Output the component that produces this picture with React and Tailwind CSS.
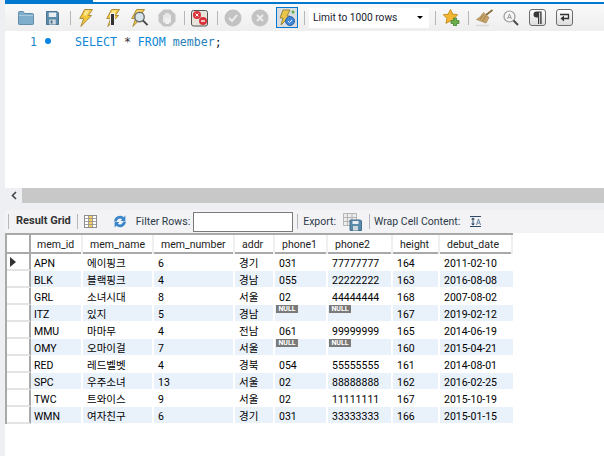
const ROWS = [
  ["APN", "에이핑크", "6", "경기", "031", "77777777", "164", "2011-02-10"],
  ["BLK", "블랙핑크", "4", "경남", "055", "22222222", "163", "2016-08-08"],
  ["GRL", "소녀시대", "8", "서울", "02", "44444444", "168", "2007-08-02"],
  ["ITZ", "있지", "5", "경남", null, null, "167", "2019-02-12"],
  ["MMU", "마마무", "4", "전남", "061", "99999999", "165", "2014-06-19"],
  ["OMY", "오마이걸", "7", "서울", null, null, "160", "2015-04-21"],
  ["RED", "레드벨벳", "4", "경북", "054", "55555555", "161", "2014-08-01"],
  ["SPC", "우주소녀", "13", "서울", "02", "88888888", "162", "2016-02-25"],
  ["TWC", "트와이스", "9", "서울", "02", "11111111", "167", "2015-10-19"],
  ["WMN", "여자친구", "6", "경기", "031", "33333333", "166", "2015-01-15"],
];

const HEADERS = ["mem_id", "mem_name", "mem_number", "addr", "phone1", "phone2", "height", "debut_date"];

const GRID = "grid grid-cols-[24px_52px_71px_81px_40px_53px_65px_47px_73px]";

function Bolt({ className = "" }) {
  return (
    <svg width="14" height="18" viewBox="0 0 15 18" preserveAspectRatio="none" className={className}>
      <path d="M6 .5h8.500L10 6.500h3.500L2 17.500l3-8H.8z" fill="#f4c63a" stroke="#a98a3c" strokeWidth="1" strokeLinejoin="round" />
      <path d="M6.500 1.500h5L8 6.500H5z" fill="#fbe58c" />
    </svg>
  );
}

function Sep({ className = "" }) {
  return <div className={`h-[14px] w-px bg-[#b4b7bb] ${className}`} />;
}

function Round({ kind, className = "" }) {
  return (
    <svg width="18" height="18" viewBox="0 0 18 18" className={className}>
      <circle cx="9" cy="9" r="8.500" fill="#c2c2c2" />
      {kind === "check" && <path d="M5 9l3 3 5-6" fill="none" stroke="#ececec" strokeWidth="2" />}
      {kind === "x" && <path d="M6 6l6 6M12 6l-6 6" fill="none" stroke="#ececec" strokeWidth="2" />}
    </svg>
  );
}

function Toolbar() {
  return (
    <div className="flex h-[27px] items-center bg-gradient-to-b from-[#f9f9fa] to-[#eeeeee]">
      {/* folder */}
      <svg width="16" height="14" viewBox="0 0 17 14" preserveAspectRatio="none" className="ml-[13px]">
        <path d="M.5 13V1.500q0-1 1-1h4l1.500 2h8.500q1 0 1 1V13q0 .5-1 .5h-14q-1 0-1-.5z" fill="#7eaecb" stroke="#5f8ba8" />
        <path d="M1 4h15v1H1z" fill="#a9cbe0" />
      </svg>
      {/* save */}
      <svg width="13" height="14" viewBox="0 0 14 14" preserveAspectRatio="none" className="ml-[12px]">
        <path d="M.5.5h11.500l1.500 1.500v11.500H.5z" fill="#5b8bab" stroke="#44708f" />
        <path d="M3 1.500h8v4.500H3z" fill="#e8eef2" />
        <path d="M3.500 8.500h7v5h-7z" fill="#cfd8de" />
        <path d="M5 9.500h2v3H5z" fill="#44708f" />
      </svg>
      <Sep className="ml-[11px]" />
      <Bolt className="ml-[8px]" />
      {/* bolt + cursor */}
      <div className="relative ml-[13px] h-[18px] w-[14px]">
        <Bolt />
        <span className="absolute left-[5px] top-[5px] h-[11px] w-[3px] bg-[#333] ring-1 ring-[#eee]" />
      </div>
      {/* bolt + magnifier */}
      <div className="relative ml-[11px] h-[18px] w-[18px]">
        <Bolt />
        <svg width="18" height="18" viewBox="0 0 19 18" className="absolute left-0 top-0">
          <circle cx="9" cy="8" r="5" fill="#d5e4ea" stroke="#6d6d6d" strokeWidth="1.500" />
          <path d="M12.500 11.500l5 5" stroke="#444" strokeWidth="2" />
        </svg>
      </div>
      {/* stop hand */}
      <svg width="18" height="18" viewBox="0 0 18 18" className="ml-[9px]">
        <path d="M5.500.5h7l5 5v7l-5 5h-7l-5-5v-7z" fill="#c4c4c4" />
        <path d="M6 13V6.500M8 12V4.500M10 12V4.500M12 13V6" stroke="#f0f0f0" strokeWidth="1.600" strokeLinecap="round" />
        <path d="M5.500 9h7v4l-2 2H7.500z" fill="#f0f0f0" />
      </svg>
      <Sep className="ml-[8px]" />
      {/* stop on error */}
      <svg width="17" height="18" viewBox="0 0 17 18" className="ml-[6px]">
        <rect x=".5" y="1.500" width="16" height="15.500" rx="2" fill="#e8e4dc" stroke="#555" />
        <circle cx="6" cy="6" r="4" fill="#d9343a" />
        <circle cx="12" cy="12" r="4" fill="#d9343a" />
        <path d="M4.500 4.500l3 3M7.500 4.500l-3 3" stroke="#fff" strokeWidth="1" />
        <path d="M10 12h4" stroke="#fff" strokeWidth="1.400" />
      </svg>
      <Sep className="ml-[9px]" />
      <Round kind="check" className="ml-[6px]" />
      <Round kind="x" className="ml-[9px]" />
      {/* toggle auto commit */}
      <div className="ml-[7px] flex h-[21px] w-[22px] items-center justify-center border border-[#0078d0] bg-[#d9dde0]">
        <svg width="18" height="18" viewBox="0 0 18 18">
          <path d="M5 1h7L9 7h3L3 16l2-7H2z" fill="#e9c64a" stroke="#9a8540" />
          <circle cx="12" cy="12" r="4.500" fill="#3f86d6" stroke="#2b64a8" />
          <path d="M10 12l1.500 1.500L14 11" fill="none" stroke="#fff" strokeWidth="1" />
          <circle cx="15" cy="3" r="1.500" fill="#5cae4a" />
        </svg>
      </div>
      <Sep className="ml-[6px]" />
      <div className="ml-[4px] flex h-[20px] w-[120px] items-center justify-between bg-white pl-[4px] pr-[6px] text-[#1a1a2e]">
        <span className="text-[10.2px]">Limit to 1000 rows</span>
        <span className="h-0 w-0 border-x-[3px] border-t-[3px] border-x-transparent border-t-black" />
      </div>
      <Sep className="ml-[6px]" />
      {/* star add */}
      <div className="relative ml-[7px] h-[17px] w-[17px]">
        <svg width="17" height="17" viewBox="0 0 17 17">
          <path d="M7.500.5l2.200 4.600 5 .7-3.600 3.500.9 5-4.500-2.400-4.500 2.400.9-5L.3 5.800l5-.7z" fill="#f2b632" stroke="#c98f22" />
          <path d="M10.500 9h3v2.500H16v3h-2.500V17h-3v-2.500H8v-3h2.500z" fill="#68ae4a" stroke="#41782e" strokeWidth=".7" />
        </svg>
      </div>
      <Sep className="ml-[8px]" />
      {/* broom */}
      <svg width="17" height="18" viewBox="0 0 17 18" className="ml-[7px]">
        <path d="M16.500 1L10 6" stroke="#8a6a3a" strokeWidth="1.600" />
        <path d="M7.500 3.500l5.500 5-3 5.500L.5 10.500q4-2 7-7z" fill="#c9a468" stroke="#97794a" strokeWidth=".6" />
        <path d="M4 10l3.500-4M6.500 12l3.500-5" stroke="#8f7140" strokeWidth=".8" />
        <path d="M0 16.500h13" stroke="#d8d8d8" strokeWidth="1.500" />
      </svg>
      {/* find */}
      <svg width="16" height="16" viewBox="0 0 16 16" className="ml-[10px]">
        <circle cx="6.500" cy="6.500" r="5.500" fill="#f5f5f5" stroke="#9a9a9a" strokeWidth="1.200" />
        <path d="M4.500 9l2-5 2 5M5.200 7.500h2.600" fill="none" stroke="#8a8a8a" strokeWidth=".8" />
        <path d="M10.500 10.500l4.500 4.500" stroke="#4a4a4a" strokeWidth="2" />
      </svg>
      {/* paragraph */}
      <div className="ml-[10px] flex h-[17px] w-[17px] items-center justify-center rounded-[3px] border border-[#6d6d6d] bg-gradient-to-b from-white to-[#dddddd]">
        <svg width="9" height="13" viewBox="0 0 9 13">
          <path d="M8 .5H3.500a3 3 0 0 0 0 6H5V13h1.200V1.500h1V13H8.600V.5z" fill="#3a3a3a" />
        </svg>
      </div>
      {/* wrap */}
      <div className="ml-[10px] flex h-[17px] w-[17px] items-center justify-center rounded-[3px] border border-[#6d6d6d] bg-gradient-to-b from-white to-[#dddddd]">
        <svg width="11" height="10" viewBox="0 0 11 10">
          <path d="M1 1.500h8.500v4H3" fill="none" stroke="#333" strokeWidth="1.300" />
          <path d="M5 2.500L1.500 5.500 5 8.500z" fill="#333" />
        </svg>
      </div>
    </div>
  );
}

function ResultBar() {
  return (
    <div className="flex h-[23px] items-center bg-[#f3f3f6] text-[#2c3a48]">
      <Sep className="ml-[3px] h-[15px]" />
      <span className="ml-[7px] text-[11px] font-bold text-[#333]">Result Grid</span>
      <Sep className="ml-[6px] h-[15px]" />
      {/* grid icon */}
      <svg width="13" height="13" viewBox="0 0 13 13" className="ml-[6px]">
        <rect x=".5" y=".5" width="12" height="12" fill="#fff" stroke="#8d8d8d" />
        <rect x="4.500" y="1" width="4" height="11" fill="#f4cf63" />
        <path d="M4.500 1v11M8.500 1v11M1 3.500h11M1 6.500h11M1 9.500h11" stroke="#8d8d8d" strokeWidth=".8" />
      </svg>
      {/* refresh */}
      <svg width="16" height="15" viewBox="2 0 12 14" className="ml-[15px]">
        <path d="M2.500 7a5.500 5.500 0 0 1 9-4l1.500-1.500V6.500H8.500l1.500-1.700a3.200 3.200 0 0 0-5 2.200z" fill="#3a86c8" />
        <path d="M13.500 7a5.500 5.500 0 0 1-9 4L3 12.500V7.500h4.500L6 9.200a3.200 3.200 0 0 0 5-2.200z" fill="#3a86c8" />
      </svg>
      <span className="ml-[8px] text-[10.5px]">Filter Rows:</span>
      <div className="ml-[3px] h-[20px] w-[100px] border border-[#7a7a7a] bg-white" />
      <Sep className="ml-[4px] h-[15px]" />
      <span className="ml-[5px] text-[10.5px]">Export:</span>
      <svg width="19" height="18" viewBox="0 0 19 18" className="ml-[7px]">
        <path d="M.5.5h13v12H.5zM.5 4.500h13M.5 8.500h13M4.500.5v12M9 .5v12" fill="#ececec" stroke="#a8a8a8" strokeWidth=".8" />
        <path d="M7 7h10.500l1 1v9.500H7z" fill="#5b8bab" stroke="#44708f" />
        <path d="M9.500 8h6v3h-6z" fill="#e8eef2" />
        <path d="M10 13h5v4.500h-5z" fill="#cfd8de" />
      </svg>
      <Sep className="ml-[7px] h-[15px]" />
      <span className="ml-[4px] text-[10.5px]">Wrap Cell Content:</span>
      <svg width="12" height="11" viewBox="0 0 12 11" className="ml-[10px]">
        <path d="M0 .5h11M0 10.500h11M3 2v7" stroke="#2f4a66" strokeWidth="1" />
        <path d="M3 1.500l-2 2h4zM3 9.500l-2-2h4z" fill="#2f4a66" />
        <path d="M6.500 9l2-6 2 6M7.300 7h2.500" fill="none" stroke="#4a6a8a" strokeWidth=".8" />
      </svg>
    </div>
  );
}

function Cell({ value, first, last, className = "" }) {
  const edge = last ? "" : "border-r-2 border-r-white";
  if (value === null) {
    return (
      <div className={`${edge} ${className}`}>
        <span className="ml-px flex h-[8px] w-[22px] items-center justify-center bg-[#7a7a7a] text-[7px] font-bold leading-none text-white">
          NULL
        </span>
      </div>
    );
  }
  return (
    <div className={`truncate ${edge} ${first ? "pl-[3px]" : "pl-[4px]"} ${className}`}>
      {value}
    </div>
  );
}

function ResultTable() {
  return (
    <div className="w-[508px] text-[10.5px] leading-[19px] text-black">
      <div className={`${GRID} h-[21px] border-y-2 border-y-[#a9a9a9] border-l-2 border-l-[#a9a9a9] text-[#222]`}>
        <div className="border-r-2 border-r-[#a9a9a9]" />
        {HEADERS.map((h, i) => (
          <div key={h} className={`border-r-2 border-r-[#efefef] ${i === 0 ? "pl-[6px]" : "pl-[7px]"}`}>
            {h}
          </div>
        ))}
      </div>
      {ROWS.map((row, i) => (
        <div key={row[0]} className={`${GRID} h-[17px] border-l-2 border-l-[#a9a9a9]`}>
          <div className="flex items-center border-r-2 border-r-[#a9a9a9] border-b-2 border-b-[#e4e4e4] pl-[3px]">
            {i === 0 && (
              <span className="h-0 w-0 border-y-[5px] border-l-[6px] border-y-transparent border-l-[#333]" />
            )}
          </div>
          {row.map((v, j) => (
            <Cell
              key={j}
              value={v}
              first={j === 0}
              last={j === row.length - 1}
              className={`border-b border-b-white ${i % 2 === 1 ? "bg-[#e9f1fb]" : "bg-white"}`}
            />
          ))}
        </div>
      ))}
    </div>
  );
}

export default function App() {
  return (
    <div className="flex h-[456px] w-[604px] overflow-hidden bg-white font-['Roboto','Noto_Sans_CJK_KR',sans-serif]">
      <div className="w-[5px] shrink-0 bg-[#eeeff2]" />
      <div className="flex min-w-0 flex-1 flex-col">
        {/* active tab line */}
        <div className="flex h-[4px]">
          <div className="w-[88px] bg-[#0078cf]" />
          <div className="flex flex-1 flex-col">
            <div className="h-[2px] bg-white" />
            <div className="h-[2px] bg-[#0078cf]" />
          </div>
        </div>
        <Toolbar />
        <div className="flex h-[157px] items-start bg-white pt-[4px] font-['DejaVu_Sans_Mono',monospace] text-[11.6px] leading-[14px] text-[#0e86d4]">
          <span className="ml-[25px] w-[9px] text-[#1f82c8]">1</span>
          <span className="ml-[6px] mt-[3px] h-[6px] w-[6px] rounded-full bg-[#0a84e0]" />
          <span className="ml-[24px] font-medium">
            SELECT <span className="text-[#333]">*</span> FROM <span className="text-[#2a7fb8]">member</span>
            <span className="text-[#222]">;</span>
          </span>
        </div>
        {/* horizontal scrollbar */}
        <div className="flex h-[15px] bg-[#c8c8c8]">
          <div className="flex w-[17px] items-center justify-center bg-[#eeeff2]">
            <svg width="6" height="9" viewBox="0 0 6 9">
              <path d="M5 1L1.500 4.500 5 8" fill="none" stroke="#444" strokeWidth="1.600" />
            </svg>
          </div>
        </div>
        <div className="h-[7px] bg-[#eeeff2]" />
        <ResultBar />
        <ResultTable />
      </div>
    </div>
  );
}
